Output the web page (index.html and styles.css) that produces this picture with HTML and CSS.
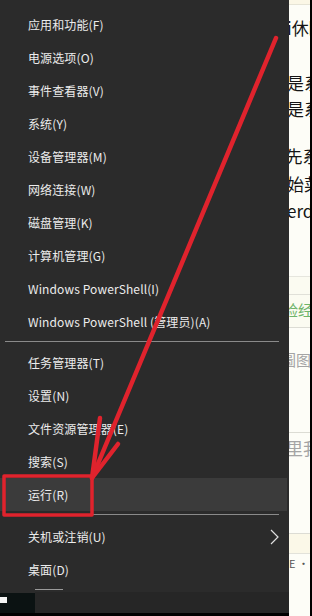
FILE: index.html
```html
<!DOCTYPE html>
<html lang="zh">
<head>
<meta charset="utf-8">
<link rel="stylesheet" href="styles.css">
</head>
<body>
<div class="screen">
  <div class="menu">
    <div class="group">
      <div class="item">应用和功能(F)</div>
      <div class="item">电源选项(O)</div>
      <div class="item">事件查看器(V)</div>
      <div class="item">系统(Y)</div>
      <div class="item">设备管理器(M)</div>
      <div class="item">网络连接(W)</div>
      <div class="item">磁盘管理(K)</div>
      <div class="item">计算机管理(G)</div>
      <div class="item">Windows PowerShell(I)</div>
      <div class="item">Windows PowerShell (管理员)(A)</div>
    </div>
    <div class="sep sep-a"></div>
    <div class="group">
      <div class="item">任务管理器(T)</div>
      <div class="item">设置(N)</div>
      <div class="item">文件资源管理器(E)</div>
      <div class="item">搜索(S)</div>
      <div class="item active">运行(R)</div>
    </div>
    <div class="sep sep-b"></div>
    <div class="group">
      <div class="item has-sub"><span>关机或注销(U)</span><span class="chev">
        <svg width="9" height="16" viewBox="0 0 9 16"><path d="M1 1 L8 8 L1 15" fill="none" stroke="#e0e0e0" stroke-width="1.2"/></svg></span></div>
      <div class="item">桌面(D)</div>
    </div>
    <div class="taskbar">
      <div class="tb-left"><span class="tb-white"></span></div>
      <div class="tb-right"><span class="tb-line"></span></div>
    </div>
  </div>
  <div class="page">
    <div class="pg-top"></div>
    <div class="pg-text t1">i休眠</div>
    <div class="pg-text t2">是系</div>
    <div class="pg-text t3">是系</div>
    <div class="pg-text t4">|先系</div>
    <div class="pg-text t5">始菜</div>
    <div class="pg-text t6">erd</div>
    <div class="pg-box">
      <div class="pg-green">验经验</div>
    </div>
    <div class="pg-gray g1">圖图中</div>
    <div class="pg-rule"></div>
    <div class="pg-gray g2">里我</div>
    <div class="pg-box2"></div>
    <div class="pg-small">E ·</div>
  </div>
  <div class="edge"></div>
  <svg class="marks" width="312" height="616" viewBox="0 0 312 616">
    <g fill="none" stroke="#e0232d" stroke-width="4.5" stroke-linecap="round" stroke-linejoin="round">
      <path d="M276 38 L92 478"/>
      <path d="M100 418 L92 478 L118 444"/>
      <rect x="4" y="476" width="88" height="39" stroke-width="3.5" stroke-linecap="butt"/>
    </g>
  </svg>
</div>
</body>
</html>
```
FILE: styles.css
```css
* { box-sizing: border-box; }
html, body { margin: 0; padding: 0; background: #000; }
body { font-family: "Noto Sans CJK SC", "Noto Sans", sans-serif; }

.screen {
  position: relative;
  width: 312px;
  height: 616px;
  display: flex;
  overflow: hidden;
  background: #000;
}

.menu {
  width: 289px;
  height: 616px;
  background: #2b2b2b;
  display: flex;
  flex-direction: column;
  padding-top: 8px;
  flex: none;
}

.item {
  height: 33px;
  display: flex;
  align-items: center;
  justify-content: space-between;
  padding: 0 10px 0 28px;
  color: #ececec;
  font-size: 12px;
  letter-spacing: 0.12px;
  white-space: nowrap;
}
.item.active {
  background: #3b3b3b;
  margin-right: 2px;
}
.chev { display: flex; align-items: center; }

.sep {
  height: 1px;
  background: #8a8a8a;
  margin-left: 5px;
  margin-right: 10px;
}
.sep-a { margin-top: 3px; margin-bottom: 4px; }
.sep-b { margin-top: 3px; margin-bottom: 5px; }

.taskbar {
  margin-top: 6px;
  flex: 1;
  display: flex;
  border-bottom: 3px solid #000;
}
.tb-left {
  width: 35px;
  background: #0b1212;
  margin-top: 1px;
  padding-top: 4px;
}
.tb-white {
  display: block;
  width: 7px;
  height: 6px;
  background: #f4f4f4;
}
.tb-right {
  flex: 1;
  background: #262626;
}
.tb-line {
  display: block;
  width: 28px;
  height: 1px;
  background: #9a9a9a;
  margin-top: -3px;
}

.page {
  width: 21px;
  flex: none;
  background: #fdfdf7;
  overflow: hidden;
  display: flex;
  flex-direction: column;
  font-size: 17px;
  color: #151515;
  white-space: nowrap;
  line-height: 22px;
}
.pg-top { height: 5px; flex: none; border-bottom: 1px solid #e6e4d6; background: #fbf7e6; }
.pg-text { height: 22px; flex: none; text-indent: -2px; }
.t1 { margin-top: 12px; }
.t2 { margin-top: 33px; }
.t3 { margin-top: 4px; }
.t4 { margin-top: 25px; text-indent: -8px; }
.t5 { margin-top: 6px; }
.t6 { margin-top: 5px; }
.pg-box {
  flex: none;
  margin-top: 54px;
  height: 52px;
  border-top: 1px solid #e6e6de;
  border-bottom: 1px solid #dcdcd4;
  background: #fbfbf1;
  padding-top: 17px;
}
.pg-box::before {
  content: "";
  display: block;
  height: 1px;
  background: #e0e0d8;
  margin-top: 0;
  position: relative;
}
.pg-green { color: #6fb46a; font-size: 15px; line-height: 18px; text-indent: -6px; margin-top: 6px; }
.pg-gray { height: 22px; flex: none; color: #a4a4a4; font-size: 15px; text-indent: -8px; }
.g1 { margin-top: 21px; }
.pg-rule { flex: none; margin-top: 61px; height: 1px; background: #dcdcd4; }
.g2 { margin-top: 4px; font-size: 17px; text-indent: -3px; }
.pg-box2 {
  flex: none;
  margin-top: 74px;
  height: 21px;
  border-top: 1px solid #dcdcd4;
  border-bottom: 1px solid #e2e2da;
  background: #fbf8e8;
}
.pg-small { flex: none; color: #555; font-size: 11px; line-height: 14px; margin-top: 2px; }

.edge { width: 2px; flex: none; background: #000; }

.marks {
  position: absolute;
  left: 0;
  top: 0;
  pointer-events: none;
}
```
